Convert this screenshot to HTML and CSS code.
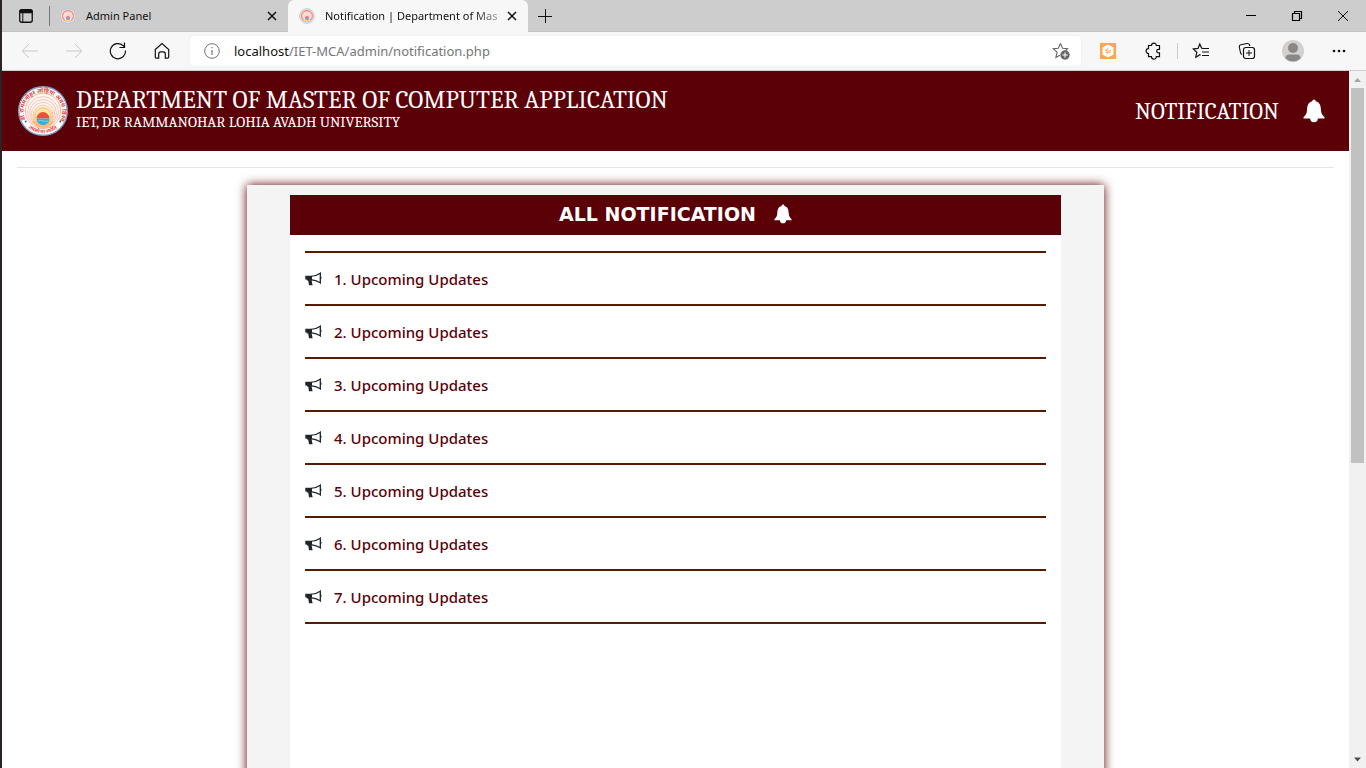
FILE: index.html
```html
<!DOCTYPE html>
<html lang="en">
<head>
<meta charset="utf-8">
<title>Notification | Department of Master of Computer Application</title>
<link rel="stylesheet" href="styles.css">
</head>
<body>
<svg class="defs" aria-hidden="true">
  <symbol id="tab-seal" viewBox="0 0 16 16">
    <circle cx="8" cy="8" r="7.300" fill="#fae7e5" stroke="#b9c9dc"/>
    <circle cx="8" cy="8" r="5.500" fill="#ffd4cb" stroke="#f08f8b" stroke-width="1.300"/>
    <circle cx="8" cy="8.500" r="3.600" fill="none" stroke="#ffe6da"/>
    <circle cx="8" cy="10" r="2" fill="#ef7669"/><path d="M6 10h4a2 2 0 0 1-4 0z" fill="#56bbd8"/>
    <path d="M5 12.300a4.500 4.500 0 0 0 6 0" fill="none" stroke="#f7df88"/>
  </symbol>
  <symbol id="cross" viewBox="0 0 10 10"><path d="M1 1l8 8M9 1L1 9" fill="none" stroke="currentColor" stroke-width="1.500"/></symbol>
  <symbol id="bell" viewBox="0 0 22 24"><path d="M9.300 2.200a1.700 1.700 0 0 1 3.400 0C17 3.200 17.800 7 18 11c.1 3.800 1.500 5.300 3.500 7.300V19.500H14.800a3.800 3.800 0 0 1-7.600 0H.5v-1.200C2.500 16.300 3.900 14.800 4 11c.2-4 1-7.800 5.300-8.800z" fill="currentColor"/></symbol>
  <symbol id="horn" viewBox="0 0 17 14">
    <path d="M.3 4.600V3.700H7V8.600H6.600L7.600 13.300H4L3.200 8.600H1.800V7.600H.3V6.200z" fill="currentColor"/>
    <path d="M6.500 4.200Q11.500 3.900 15.200 1.200V10.800Q11.500 8.400 7 7.900" fill="none" stroke="currentColor" stroke-width="1.100"/>
    <path d="M15 .3q.9 0 .9 1v3.200q.7.200.7 1.200t-.7 1.200V11q0 1-.9 1z" fill="currentColor"/>
  </symbol>
</svg>

<div class="window">
  <div class="tabs">
    <button class="icon-btn tab-menu" aria-label="Tab actions"><svg width="16" height="16" viewBox="0 0 16 16"><rect x="1.750" y="1.750" width="12.500" height="12.500" rx="2" fill="none" stroke="#111" stroke-width="1.300"/><path d="M1.500 3q0-1.500 1.500-1.500h10q1.500 0 1.500 1.500v2.200h-13z" fill="#111"/><path d="M4.800 5v9" stroke="#111"/></svg></button>
    <span class="tab-rule"></span>
    <div class="tab">
      <svg width="16" height="16"><use href="#tab-seal"/></svg>
      <span class="tab-title">Admin Panel</span>
      <button class="icon-btn" aria-label="Close tab"><svg width="10" height="10"><use href="#cross"/></svg></button>
    </div>
    <div class="tab tab-active">
      <svg width="16" height="16"><use href="#tab-seal"/></svg>
      <span class="tab-title tab-title-long">Notification | Department of Mas</span>
      <button class="icon-btn" aria-label="Close tab"><svg width="10" height="10"><use href="#cross"/></svg></button>
    </div>
    <button class="icon-btn new-tab" aria-label="New tab"><svg width="14" height="14" viewBox="0 0 14 14"><path d="M7.500 0v14M0 7.500h14" stroke="#111"/></svg></button>
    <div class="win-controls">
      <button class="icon-btn" aria-label="Minimize"><svg width="12" height="12" viewBox="0 0 12 12"><path d="M1 5.500h10" stroke="#000"/></svg></button>
      <button class="icon-btn" aria-label="Restore"><svg width="12" height="12" viewBox="0 0 12 12"><path d="M1.500 3.500h7v7h-7zM3.500 3.500v-2h7v7h-2" fill="none" stroke="#000" stroke-width="1.200"/></svg></button>
      <button class="icon-btn" aria-label="Close"><svg width="12" height="12" viewBox="0 0 12 12"><path d="M1 1l10 10M11 1L1 11" stroke="#111"/></svg></button>
    </div>
  </div>

  <div class="toolbar">
    <div class="nav">
      <button class="icon-btn faded" aria-label="Back"><svg width="18" height="16" viewBox="0 0 18 16"><path d="M17 8H1.500M8 1L1.200 8 8 15" fill="none" stroke="currentColor"/></svg></button>
      <button class="icon-btn faded" aria-label="Forward"><svg width="18" height="16" viewBox="0 0 18 16"><path d="M1 8h15.500M10 1l6.800 7L10 15" fill="none" stroke="currentColor"/></svg></button>
      <button class="icon-btn" aria-label="Refresh"><svg width="18" height="18" viewBox="0 0 18 18"><path d="M16.500 8.500A7.600 7.600 0 1 1 14 3.500l1 1M15.500.5v5h-5" fill="none" stroke="#111" stroke-width="1.200"/></svg></button>
      <button class="icon-btn" aria-label="Home"><svg width="16" height="18" viewBox="0 0 16 18"><path d="M1.300 7.500L8 1.500l6.700 6V15q0 1.200-1.200 1.200h-2.200V12q0-2.200-2-2.200H6.700q-2 0-2 2.200v4.200H2.500Q1.300 16.200 1.300 15z" fill="none" stroke="#111" stroke-width="1.200"/></svg></button>
    </div>
    <div class="address">
      <svg width="16" height="16" viewBox="0 0 16 16"><circle cx="8" cy="8" r="7.300" fill="none" stroke="#747474"/><path d="M8 7v5M8 4v1.300" stroke="#747474" stroke-width="1.200"/></svg>
      <div class="url"><span class="host">localhost</span>/IET-MCA/admin/notification.php</div>
      <button class="icon-btn" aria-label="Add to favorites"><svg width="18" height="18" viewBox="0 0 18 18"><path d="M8.500 1.500l2.100 4.700 5 .5-3 3M8.500 1.500L6.300 6.200 1.300 6.700l3.800 3.500-1.200 5.300 4-2.200" fill="none" stroke="#666" stroke-width="1.100"/><circle cx="13" cy="13" r="4.700" fill="#666"/><path d="M13 10.300v5.400M10.300 13h5.400" stroke="#fff"/></svg></button>
    </div>
    <div class="actions">
      <button class="icon-btn" aria-label="Extension"><svg width="16" height="16" viewBox="0 0 16 16"><path d="M0 0h16v16H0z" fill="#ffa64c"/><path d="M8 1.500l5.500 3.100v6.800L8 14.500l-5.500-3.100V4.600z" fill="#fff"/><path d="M8.500 4.500L6 8h3L7 11.500M6 6v2M10.500 6.500L9.500 10M5.500 9.500h2" fill="none" stroke="#ffa052" stroke-width=".9"/></svg></button>
      <button class="icon-btn" aria-label="Extensions"><svg width="18" height="18" viewBox="0 0 18 18"><path d="M3.500 3.500h3a2.400 2.400 0 0 1 4.800 0h3.200v3.800h-1a1.800 1.800 0 0 0 0 3.600h1v3.800h-3.200a2.400 2.400 0 0 1-4.800 0h-3v-3.200a2.400 2.400 0 0 1 0-4.800z" fill="none" stroke="#111" stroke-width="1.200"/></svg></button>
      <span class="tool-rule"></span>
      <button class="icon-btn" aria-label="Favorites"><svg width="18" height="18" viewBox="0 0 18 18"><path d="M11 6.500L9.500 6 7.800 2 6 6.400l-4.800.5 3.600 3.400-1 4.900 4-2.400.8.500M10 6.500h7M10 10h7M10 13.500h7" fill="none" stroke="#111" stroke-width="1.200"/></svg></button>
      <button class="icon-btn" aria-label="Collections"><svg width="18" height="18" viewBox="0 0 18 18"><path d="M4 12.500q-1.200-.4-1.500-1.800L1.300 5Q1 3.200 2.800 2.800L9 1.500q1.800-.2 2.400 1.300l.4 1.200" fill="none" stroke="#111" stroke-width="1.100"/><rect x="5.500" y="5.500" width="11" height="11" rx="2.200" fill="#f7f7f7" stroke="#111" stroke-width="1.200"/><path d="M11 8v6M8 11h6" stroke="#111"/></svg></button>
      <button class="icon-btn" aria-label="Profile"><svg width="22" height="22" viewBox="0 0 22 22"><circle cx="11" cy="11" r="11" fill="#d2d0ce"/><circle cx="11" cy="8" r="5" fill="#8a8886"/><path d="M3.500 18.500q0-4 4-4h7q4 0 4 4a11 11 0 0 1-15 0z" fill="#8a8886"/></svg></button>
      <button class="icon-btn" aria-label="Settings"><svg width="16" height="4" viewBox="0 0 16 4"><g fill="#111"><circle cx="3" cy="2" r="1.300"/><circle cx="8" cy="2" r="1.300"/><circle cx="13" cy="2" r="1.300"/></g></svg></button>
    </div>
  </div>

  <div class="viewport">
    <div class="page">
      <header class="site-header">
        <svg class="logo" width="50" height="50" viewBox="0 0 50 50" role="img" aria-label="University seal">
          <defs>
            <path id="arc-top" d="M7.400 33.500a19.200 19.200 0 1 1 35.200 0"/>
            <path id="arc-low" d="M10.500 42a22.800 22.800 0 0 0 29 0"/>
          </defs>
          <circle cx="25" cy="25" r="24.300" fill="#fff" stroke="#7f9fca" stroke-width="1.400"/>
          <circle cx="25" cy="25" r="17.600" fill="#fff8f3" stroke="#f4a091" stroke-width=".8"/>
          <circle cx="25" cy="31" r="10.500" fill="#ffe8a0"/>
          <path d="M14 35a12 12 0 0 0 22 0z" fill="#ffcf54"/>
          <g fill="none" stroke="#f6ab9c" stroke-width=".7">
            <circle cx="25" cy="30" r="8"/><circle cx="25" cy="29" r="9.800"/><circle cx="25" cy="28" r="11.600"/><circle cx="25" cy="27" r="13.400"/><circle cx="25" cy="26" r="15.400"/>
          </g>
          <path d="M18.500 32.500a6.500 6.500 0 0 1 13 0z" fill="#ee5139"/>
          <path d="M18.500 32.500h13a6.500 6.500 0 0 1-13 0z" fill="#29b2df"/>
          <path d="M20 35q2.500-1 5 0t5 0" fill="none" stroke="#9ce1f4" stroke-width=".7"/>
          <text class="seal-text"><textPath href="#arc-top">डॉ.राममनोहर लोहिया अवध विश्वविद्यालय</textPath></text>
          <text class="seal-text seal-motto"><textPath href="#arc-low">तमसो मा ज्योतिर्गमय</textPath></text>
          <circle cx="7.700" cy="35.500" r="1" fill="#285eaa"/><circle cx="42.300" cy="35.500" r="1" fill="#285eaa"/>
        </svg>
        <div class="brand">
          <h1>DEPARTMENT OF MASTER OF COMPUTER APPLICATION</h1>
          <p>IET, DR RAMMANOHAR LOHIA AVADH UNIVERSITY</p>
        </div>
        <a class="header-link" href="#all">NOTIFICATION <svg width="22" height="24"><use href="#bell"/></svg></a>
      </header>
      <hr class="divider">
      <main class="card" id="all">
        <section class="panel">
          <h2>ALL NOTIFICATION <svg width="18" height="20"><use href="#bell"/></svg></h2>
          <ul class="list">
            <li><svg width="17" height="14"><use href="#horn"/></svg><a href="#n1">1. Upcoming Updates</a></li>
            <li><svg width="17" height="14"><use href="#horn"/></svg><a href="#n2">2. Upcoming Updates</a></li>
            <li><svg width="17" height="14"><use href="#horn"/></svg><a href="#n3">3. Upcoming Updates</a></li>
            <li><svg width="17" height="14"><use href="#horn"/></svg><a href="#n4">4. Upcoming Updates</a></li>
            <li><svg width="17" height="14"><use href="#horn"/></svg><a href="#n5">5. Upcoming Updates</a></li>
            <li><svg width="17" height="14"><use href="#horn"/></svg><a href="#n6">6. Upcoming Updates</a></li>
            <li><svg width="17" height="14"><use href="#horn"/></svg><a href="#n7">7. Upcoming Updates</a></li>
          </ul>
        </section>
      </main>
    </div>
    <div class="scrollbar" aria-hidden="true">
      <svg width="17" height="17" viewBox="0 0 17 17"><path d="M5 11l3.500-4 3.500 4z" fill="#a3a3a3"/></svg>
      <div class="track"><div class="thumb"></div></div>
      <svg width="17" height="17" viewBox="0 0 17 17"><path d="M5 6.500l3.500 4 3.500-4z" fill="#505050"/></svg>
    </div>
  </div>
</div>
</body>
</html>
```
FILE: styles.css
```css
* { box-sizing: border-box; }
body {
  margin: 0;
  color: #212529;
  font-family: "Noto Sans", "Open Sans", sans-serif;
  background: #fff;
}
.defs { position: absolute; width: 0; height: 0; }
svg { display: block; flex: none; }
.window {
  display: flex;
  flex-direction: column;
  height: 100vh;
  overflow: hidden;
  border-left: 2px solid #2b2325;
}
.icon-btn {
  display: flex;
  align-items: center;
  justify-content: center;
  flex: none;
  padding: 0;
  border: 0;
  color: #111;
  background: none;
}

/* Tab strip */
.tabs {
  display: flex;
  align-items: center;
  flex: none;
  height: 32px;
  background: #cdcdcd;
  border-bottom: 1px solid #c2c2c2;
}
.tab-menu { width: 47px; }
.tab-rule { width: 1px; height: 20px; background: #777; }
.tab {
  display: flex;
  align-items: center;
  gap: 10px;
  width: 238px;
  height: 32px;
  padding: 0 11px 0 10px;
  font-size: 11px;
}
.tab-active {
  width: 240px;
  padding-left: 11px;
  border-radius: 6px 6px 0 0;
  background: #f7f7f7;
}
.tab-title {
  flex: 1;
  min-width: 0;
  color: #111;
  white-space: nowrap;
}
.tab-title-long { mask-image: linear-gradient(to right, #000 85%, transparent 110%); }
.new-tab { width: 34px; }
.win-controls { display: flex; margin-left: auto; }
.win-controls .icon-btn { width: 46px; height: 28px; }

/* Toolbar */
.toolbar {
  display: flex;
  align-items: center;
  flex: none;
  height: 39px;
  background: #f7f7f7;
  border-bottom: 1px solid #cecece;
}
.nav { display: flex; padding: 0 6px; }
.nav .icon-btn { width: 44px; height: 32px; }
.faded { color: #c8c8c8; }
.address {
  display: flex;
  align-items: center;
  gap: 14px;
  flex: 1;
  height: 30px;
  padding: 0 11px 0 14px;
  border-radius: 4px;
  background: #fff;
  box-shadow: 0 0 2px #e4e4e4;
}
.url { flex: 1; color: #767676; font-size: 13px; }
.host { color: #111; }
.actions { display: flex; align-items: center; padding: 0 4px; }
.actions .icon-btn { width: 46px; height: 32px; }
.tool-rule { width: 1px; height: 16px; background: #ccc; }

/* Page */
.viewport { display: flex; flex: 1; min-height: 0; }
.page { flex: 1; overflow: hidden; }
.site-header {
  display: flex;
  align-items: center;
  gap: 8px;
  height: 80px;
  padding: 0 24px 0 16px;
  color: #fff;
  background: #5c0007;
  font-family: Cambria, "Noto Serif", "DejaVu Serif Condensed", "DejaVu Serif", serif;
}
.seal-text { font: bold 6px "Noto Sans", sans-serif; fill: #e9473f; }
.seal-motto { font-size: 5px; }
.brand { padding-bottom: 4px; white-space: nowrap; }
.brand h1 { margin: 0; font-size: 25px; font-weight: 400; line-height: 26px; }
.brand p { margin: 0; font-size: 15px; line-height: 19px; }
.header-link {
  display: flex;
  align-items: center;
  gap: 24px;
  margin-left: auto;
  color: inherit;
  font-size: 23px;
  text-decoration: none;
}
.divider { margin: 16px 15px; border: 0; border-top: 1px solid #e5e5e5; }
.card {
  width: 857px;
  max-width: 90%;
  min-height: 900px;
  margin: 17px auto 0;
  padding: 10px 43px;
  background: #f4f4f4;
  box-shadow: 0 0 10px #5c0007;
}
.panel { min-height: 860px; background: #fff; }
.panel h2 {
  display: flex;
  align-items: center;
  justify-content: center;
  gap: 18px;
  height: 40px;
  margin: 0;
  padding-bottom: 3px;
  color: #fff;
  background: #5c0007;
  font: bold 19px "DejaVu Sans", sans-serif;
}
.list { margin: 16px 15px; padding: 0; list-style: none; border-top: 2px solid #571b00; }
.list li {
  display: flex;
  align-items: center;
  gap: 12px;
  height: 53px;
  border-bottom: 2px solid #571b00;
}
.list a { color: #5c0007; font-size: 15px; font-weight: 500; text-decoration: none; }

/* Scrollbar */
.scrollbar { display: flex; flex-direction: column; width: 17px; background: #f1f1f1; }
.track { flex: 1; padding: 0 2px; }
.thumb { height: 56.500%; background: #c1c1c1; }
```
